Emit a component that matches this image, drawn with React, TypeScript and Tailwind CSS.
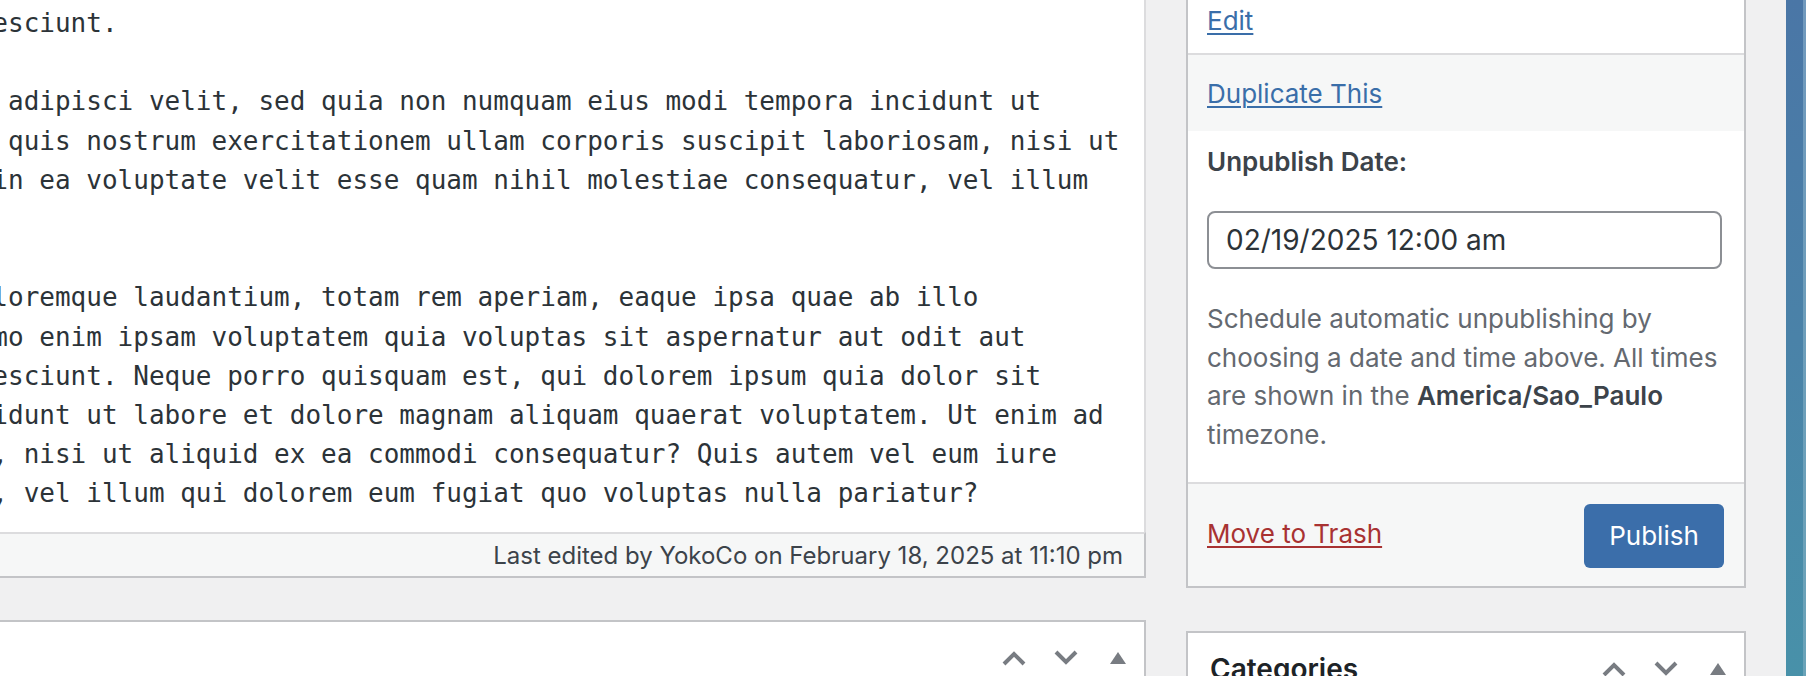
import React from "react";

const mono = { fontFamily: '"DejaVu Sans Mono", monospace' } as const;
const sans = { fontFamily: 'Inter, "Noto Sans", sans-serif' } as const;

const lines = [
  "nesciunt.",
  "",
  ", adipisci velit, sed quia non numquam eius modi tempora incidunt ut",
  ", quis nostrum exercitationem ullam corporis suscipit laboriosam, nisi ut",
  " in ea voluptate velit esse quam nihil molestiae consequatur, vel illum",
  "",
  "",
  "oloremque laudantium, totam rem aperiam, eaque ipsa quae ab illo",
  "emo enim ipsam voluptatem quia voluptas sit aspernatur aut odit aut",
  "nesciunt. Neque porro quisquam est, qui dolorem ipsum quia dolor sit",
  "cidunt ut labore et dolore magnam aliquam quaerat voluptatem. Ut enim ad",
  "m, nisi ut aliquid ex ea commodi consequatur? Quis autem vel eum iure",
  "r, vel illum qui dolorem eum fugiat quo voluptas nulla pariatur?",
];

function ChevronUp() {
  return (
    <svg width="26" height="16" viewBox="0 0 26 16">
      <path d="M3 14 L13 4 L23 14" stroke="#787c82" strokeWidth="4" fill="none" />
    </svg>
  );
}
function ChevronDown() {
  return (
    <svg width="26" height="16" viewBox="0 0 26 16">
      <path d="M3 2 L13 12 L23 2" stroke="#787c82" strokeWidth="4" fill="none" />
    </svg>
  );
}
function Triangle() {
  return (
    <svg width="16" height="12" viewBox="0 0 16 12">
      <path d="M8 0 L16 12 L0 12 Z" fill="#787c82" />
    </svg>
  );
}

function HandleActions() {
  return (
    <div className="flex">
      <div className="w-[52px] h-[52px] flex items-center justify-center">
        <ChevronUp />
      </div>
      <div className="w-[52px] h-[52px] flex items-center justify-center">
        <ChevronDown />
      </div>
      <div className="w-[52px] h-[52px] flex items-center justify-center">
        <Triangle />
      </div>
    </div>
  );
}

export default function App() {
  return (
    <div className="w-[1806px] h-[676px] overflow-hidden bg-[#f0f0f1] flex" style={sans}>
      {/* Editor column */}
      <div className="w-[1146px] shrink-0 flex flex-col">
        <div className="h-[532px] shrink-0 bg-white border-r-2 border-[#dcdcde] overflow-hidden">
          <div
            className="ml-[-23.3px] pt-[4px] text-[26px] leading-[39.2px] text-[#2c3338] whitespace-pre"
            style={mono}
          >
            {lines.map((l, i) => (
              <div key={i} className="h-[39.2px]">
                {l}
              </div>
            ))}
          </div>
        </div>
        <div className="h-[46px] shrink-0 bg-[#f6f7f7] border-t-2 border-[#dcdcde] border-b-2 border-b-[#c3c4c7] border-r-2 border-r-[#c3c4c7] flex items-center justify-end pr-[21px]">
          <span className="text-[24px] leading-[39px] text-[#3c434a]">
            Last edited by YokoCo on February 18, 2025 at 11:10 pm
          </span>
        </div>
        <div className="h-[42px] shrink-0" />
        <div className="h-[120px] shrink-0 bg-white border-t-2 border-r-2 border-[#c3c4c7]">
          <div className="h-[72px] flex items-center justify-end">
            <HandleActions />
          </div>
        </div>
      </div>

      {/* Sidebar */}
      <div className="w-[560px] shrink-0 ml-[40px] flex flex-col">
        <div className="shrink-0 bg-white border-x-2 border-b-2 border-[#c3c4c7]">
          <div className="pt-[1px] pb-[13px] px-[19px] border-b-2 border-[#dcdcde]">
            <a className="text-[26px] leading-[39px] text-[#3a6ea9] underline decoration-2 underline-offset-[3px]">
              Edit
            </a>
          </div>
          <div className="bg-[#f6f7f7] pt-[19px] pb-[18px] px-[19px]">
            <a className="text-[26px] leading-[39px] text-[#3a6ea9] underline decoration-2 underline-offset-[3px]">
              Duplicate This
            </a>
          </div>
          <div className="pt-[11px] pb-[27px] px-[19px] border-b-2 border-[#dcdcde]">
            <div className="text-[26px] leading-[39px] font-semibold text-[#3c434a]">Unpublish Date:</div>
            <div className="mt-[30px] h-[58px] w-[515px] border-2 border-[#8c8f94] rounded-[8px] flex items-center pl-[17px] text-[28px] leading-[39px] text-[#2c3338]">
              02/19/2025 12:00 am
            </div>
            <div className="mt-[31px] text-[26px] leading-[38.7px] text-[#646970] whitespace-nowrap">
              Schedule automatic unpublishing by
              <br />
              choosing a date and time above. All times
              <br />
              are shown in the <span className="font-semibold text-[#3c434a]">America/Sao_Paulo</span>
              <br />
              timezone.
            </div>
          </div>
          <div className="bg-[#f6f7f7] pt-[20px] pb-[18px] pl-[19px] pr-[20px] flex items-center justify-between">
            <a className="text-[26px] leading-[39px] text-[#a83232] underline decoration-2 underline-offset-[3px] mt-[-4px]">
              Move to Trash
            </a>
            <div className="w-[140px] h-[64px] rounded-[6px] bg-[#3b6eaa] text-white text-[26px] flex items-center justify-center">
              Publish
            </div>
          </div>
        </div>

        <div className="mt-[43px] h-[120px] shrink-0 bg-white border-2 border-[#c3c4c7]">
          <div className="h-[72px] flex items-center justify-between pl-[22px]">
            <span className="text-[28px] font-semibold text-[#1d2327]">Categories</span>
            <HandleActions />
          </div>
        </div>
      </div>

      {/* Desktop strip */}
      <div className="ml-[40px] w-[20px] shrink-0 flex">
        <div className="flex-1 bg-gradient-to-b from-[#4a76a6] via-[#4a82a8] to-[#4891a9]" />
        <div className="w-[3px] bg-gradient-to-b from-[#7199bd] to-[#6aa3b8]" />
      </div>
    </div>
  );
}
